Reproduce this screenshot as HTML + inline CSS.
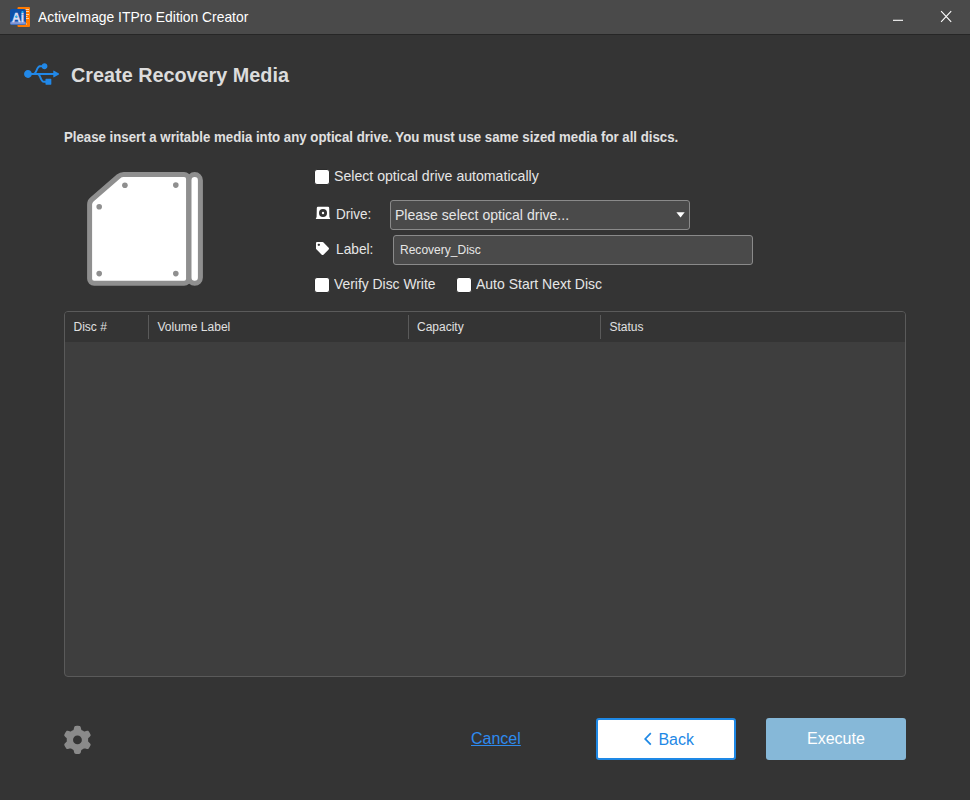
<!DOCTYPE html>
<html><head><meta charset="utf-8">
<style>
*{box-sizing:border-box;margin:0;padding:0}
html,body{width:970px;height:800px;overflow:hidden;background:#343434;font-family:"Liberation Sans",sans-serif;color:#e6e6e6}
.abs{position:absolute}
.t{position:absolute;white-space:nowrap;transform-origin:0 0;display:inline-block}
#titlebar{left:0;top:0;width:970px;height:34px;background:#4a4a4a}
#tbline{left:0;top:34px;width:970px;height:1px;background:#262626}
#apptitle{left:38px;top:8px;font-size:15px;color:#fff;line-height:18px;transform:scaleX(.924)}
#h1{left:70.5px;top:62px;font-size:20.5px;font-weight:bold;color:#dcdcdc;line-height:26px;transform:scaleX(.966)}
#msg{left:64px;top:128px;font-size:14px;font-weight:bold;color:#e0e0e0;line-height:18px;transform:scaleX(.945)}
.cb{width:16px;height:16px;background:#fff;border:1px solid #2d2d2d;border-radius:3px}
.lbl{font-size:15px;color:#e6e6e6;line-height:18px}
#drive{left:390px;top:200px;width:300px;height:30px;background:#4a4a4a;border:1px solid #8a8a8a;border-radius:3px}
#drive span{left:3.7px;top:5px;font-size:15px;line-height:18px;color:#e6e6e6;transform:scaleX(.936)}
#label{left:393px;top:235px;width:360px;height:30px;background:#4a4a4a;border:1px solid #8a8a8a;border-radius:3px}
#label span{left:6.4px;top:6px;font-size:13px;line-height:16px;color:#e6e6e6;transform:scaleX(.925)}
#table{left:64px;top:311px;width:842px;height:366px;background:#3e3e3e;border:1px solid #5a5a5a;border-radius:4px;overflow:hidden}
#thead{left:0;top:0;width:840px;height:30px;background:#343434}
.th{font-size:12px;color:#e0e0e0;top:8px;line-height:14px;white-space:nowrap}
.sep{top:3px;width:1px;height:24px;background:#5a5a5a}
#cancel{left:471px;top:729px;font-size:16px;color:#2e8bef;text-decoration:underline;line-height:20px}
#back{left:596px;top:718px;width:140px;height:42px;background:#fff;border:2px solid #1e88e5;border-radius:3px}
#back span{left:60.4px;top:9.5px;color:#1e88e5;font-size:16px;line-height:20px}
#exec{left:766px;top:718px;width:140px;height:42px;background:#86b8d8;border-radius:3px}
#exec span{left:41px;top:10.5px;color:#fff;font-size:16px;line-height:20px}
</style></head><body>
<div class="abs" id="titlebar"></div><div class="abs" id="tbline"></div>
<svg class="abs" style="left:8px;top:6px" width="24" height="22" viewBox="0 0 24 22">
<rect x="9.500" y="1" width="12.500" height="20" rx="1" fill="#ff7a00"/>
<path d="M17.500 3.500h3.500M18 5.500h3M18 8.500h3M18 10.500h1.500M18 12.500h3M18 18h1" stroke="#ffe6cc" stroke-width=".8"/>
<rect x="2" y="3" width="16" height="16" rx="2" fill="#0d4fa8"/>
<rect x="2.300" y="15.600" width="15.400" height="3" rx="1.200" fill="#7f95d6"/>
<text x="4" y="15.500" font-family="Liberation Sans, sans-serif" font-weight="bold" font-size="12" fill="#dcdcf2" stroke="#dcdcf2" stroke-width=".35" textLength="12" lengthAdjust="spacingAndGlyphs">Ai</text>
<circle cx="14.500" cy="6" r="1.100" fill="#27b4f0"/><ellipse cx="8.300" cy="10.600" rx="1.300" ry=".9" fill="#27b4f0"/>
</svg>
<div class="t" id="apptitle">ActiveImage ITPro Edition Creator</div>
<svg class="abs" style="left:880px;top:0" width="90" height="34" viewBox="0 0 90 34"><path d="M13 20.3h10" stroke="#fff" stroke-width="1.1" fill="none"/><path d="M61.1 11.2l10.1 10.6m0-10.6l-10.1 10.6" stroke="#fff" stroke-width="1.1" fill="none"/></svg>

<svg class="abs" style="left:23.8px;top:59.6px" width="35.1" height="28" viewBox="0 0 640 512"><path fill="#2188e8" d="M641.5 256c0 3.100-1.700 6.100-4.500 7.500L547.900 317c-1.400.8-2.800 1.400-4.500 1.400-1.400 0-3.100-.3-4.500-1.100-2.800-1.700-4.500-4.500-4.500-7.800v-35.600H295.700c25.300 39.600 40.500 106.900 69.600 106.900H392V354c0-5 3.900-8.900 8.900-8.900H490c5 0 8.900 3.900 8.900 8.900v89.100c0 5-3.900 8.900-8.900 8.900h-89.100c-5 0-8.900-3.900-8.900-8.900v-26.700h-26.700c-75.400 0-81.100-142.500-124.700-142.500H140.300c-8.100 30.600-35.900 53.500-69 53.500C32 327.300 0 295.300 0 256s32-71.300 71.300-71.300c33.100 0 61 22.800 69 53.500 39.100 0 43.900 9.500 74.600-60.400C255 88.700 273 95.700 323.800 95.700c7.500-20.900 27-35.600 50.400-35.600 29.500 0 53.500 23.900 53.500 53.500s-23.900 53.500-53.500 53.500c-23.400 0-42.900-14.800-50.400-35.600H294c-29.100 0-44.300 67.400-69.600 106.900h310.100v-35.600c0-3.300 1.700-6.100 4.500-7.800 2.800-1.700 6.400-1.400 8.900.3l89.100 53.500c2.800 1.100 4.500 4.100 4.500 7.200z"/></svg>
<div class="t" id="h1">Create Recovery Media</div>
<div class="t" id="msg">Please insert a writable media into any optical drive. You must use same sized media for all discs.</div>

<svg class="abs" style="left:80px;top:165px" width="130" height="130" viewBox="80 165 130 130">
<path d="M123.700 174.500H184.100a4.500 4.500 0 0 1 4.500 4.500V278.800a4.500 4.500 0 0 1 -4.500 4.500H94.100a4.500 4.500 0 0 1 -4.500 -4.500V204.500Q89.600 201.500 91.900 199.500L118.400 176.500Q120.700 174.500 123.700 174.500z" fill="#fff" stroke="#8f8f8f" stroke-width="5" stroke-linejoin="round"/>
<rect x="189" y="174.500" width="11.400" height="108.800" rx="5.700" fill="#fff" stroke="#8f8f8f" stroke-width="5"/>
<g fill="#8f8f8f"><circle cx="124.900" cy="185.300" r="2.800"/><circle cx="175.800" cy="185.100" r="2.800"/><circle cx="99.200" cy="206.800" r="2.800"/><circle cx="99.200" cy="273.600" r="2.800"/><circle cx="175.800" cy="273.600" r="2.800"/></g>
</svg>

<div class="abs cb" style="left:314px;top:169px"></div>
<div class="t lbl" style="left:334.3px;top:167px;transform:scaleX(.941)">Select optical drive automatically</div>

<svg class="abs" style="left:314px;top:205px" width="18" height="16" viewBox="314 205 18 16"><path d="M318 206.700h10a1.200 1.200 0 0 1 1.200 1.200l.2 9.200.7 1.400a.4.400 0 0 1-.4.600h-13.400a.4.400 0 0 1-.4-.6l.7-1.400.2-9.200a1.200 1.200 0 0 1 1.200-1.200z" fill="#fff"/><circle cx="323" cy="213" r="4" fill="#343434"/><circle cx="323" cy="213" r="1.200" fill="#fff"/></svg>
<div class="t lbl" style="left:335.6px;top:205px;transform:scaleX(.9)">Drive:</div>
<div class="abs" id="drive"><span class="t">Please select optical drive...</span>
<svg class="abs" style="left:284.5px;top:11px" width="10" height="6" viewBox="0 0 10 6"><path d="M.4.300h8.300L4.550 5.500z" fill="#fff"/></svg></div>

<svg class="abs" style="left:316.3px;top:241.5px" width="13" height="13" viewBox="0 0 512 512"><path fill="#fff" d="M0 252.118V48C0 21.490 21.490 0 48 0h204.118a48 48 0 0 1 33.941 14.059l211.882 211.882c18.745 18.745 18.745 49.137 0 67.882L293.823 497.941c-18.745 18.745-49.137 18.745-67.882 0L14.059 286.059A48 48 0 0 1 0 252.118zM112 64c-26.510 0-48 21.490-48 48s21.490 48 48 48 48-21.490 48-48-21.490-48-48-48z"/></svg>
<div class="t lbl" style="left:335.6px;top:240px;transform:scaleX(.915)">Label:</div>
<div class="abs" id="label"><span class="t">Recovery_Disc</span></div>

<div class="abs cb" style="left:314px;top:277px"></div>
<div class="t lbl" style="left:334px;top:275.2px;transform:scaleX(.925)">Verify Disc Write</div>
<div class="abs cb" style="left:456px;top:277px"></div>
<div class="t lbl" style="left:476px;top:275.2px;transform:scaleX(.933)">Auto Start Next Disc</div>

<div class="abs" id="table"><div class="abs" id="thead"></div>
<div class="abs th" style="left:8.500px">Disc #</div><div class="abs sep" style="left:83px"></div>
<div class="abs th" style="left:92.500px">Volume Label</div><div class="abs sep" style="left:343px"></div>
<div class="abs th" style="left:352px">Capacity</div><div class="abs sep" style="left:535px"></div>
<div class="abs th" style="left:544.500px">Status</div>
</div>

<svg class="abs" style="left:60px;top:720px" width="36" height="40" viewBox="60 720 36 40"><path fill="#8a8a8a" fill-rule="evenodd" d="M88.15 739.90L88.14 739.53L88.12 739.15L88.09 738.78L88.11 738.40L88.40 737.97L88.93 737.46L89.56 736.88L90.14 736.26L90.55 735.64L90.67 735.09L90.52 734.62L90.33 734.17L90.12 733.72L89.90 733.28L89.66 732.85L89.41 732.43L89.14 732.02L88.86 731.61L88.56 731.22L88.23 730.85L87.69 730.68L86.95 730.73L86.12 730.93L85.30 731.18L84.60 731.38L84.08 731.42L83.74 731.24L83.43 731.03L83.12 730.83L82.80 730.63L82.47 730.45L82.14 730.28L81.80 730.13L81.48 729.92L81.25 729.45L81.08 728.74L80.89 727.91L80.64 727.09L80.31 726.43L79.89 726.04L79.41 725.94L78.92 725.88L78.43 725.83L77.94 725.81L77.45 725.80L76.96 725.81L76.47 725.83L75.98 725.88L75.49 725.94L75.01 726.04L74.59 726.43L74.26 727.09L74.01 727.91L73.82 728.74L73.65 729.45L73.42 729.92L73.10 730.13L72.76 730.28L72.43 730.45L72.10 730.63L71.78 730.83L71.47 731.03L71.16 731.24L70.82 731.42L70.30 731.38L69.60 731.18L68.78 730.93L67.95 730.73L67.21 730.68L66.67 730.85L66.34 731.22L66.04 731.61L65.76 732.02L65.49 732.43L65.24 732.85L65.00 733.28L64.78 733.72L64.57 734.17L64.38 734.62L64.23 735.09L64.35 735.64L64.76 736.26L65.34 736.88L65.97 737.46L66.50 737.97L66.79 738.40L66.81 738.78L66.78 739.15L66.76 739.53L66.75 739.90L66.76 740.27L66.78 740.65L66.81 741.02L66.79 741.40L66.50 741.83L65.97 742.34L65.34 742.92L64.76 743.54L64.35 744.16L64.23 744.71L64.38 745.18L64.57 745.63L64.78 746.08L65.00 746.52L65.24 746.95L65.49 747.37L65.76 747.78L66.04 748.19L66.34 748.58L66.67 748.95L67.21 749.12L67.95 749.07L68.78 748.87L69.60 748.62L70.30 748.42L70.82 748.38L71.16 748.56L71.47 748.77L71.78 748.97L72.10 749.17L72.43 749.35L72.76 749.52L73.10 749.67L73.42 749.88L73.65 750.35L73.82 751.06L74.01 751.89L74.26 752.71L74.59 753.37L75.01 753.76L75.49 753.86L75.98 753.92L76.47 753.97L76.96 753.99L77.45 754.00L77.94 753.99L78.43 753.97L78.92 753.92L79.41 753.86L79.89 753.76L80.31 753.37L80.64 752.71L80.89 751.89L81.08 751.06L81.25 750.35L81.48 749.88L81.80 749.67L82.14 749.52L82.47 749.35L82.80 749.17L83.12 748.97L83.43 748.77L83.74 748.56L84.08 748.38L84.60 748.42L85.30 748.62L86.12 748.87L86.95 749.07L87.69 749.12L88.23 748.95L88.56 748.58L88.86 748.19L89.14 747.78L89.41 747.37L89.66 746.95L89.90 746.52L90.12 746.08L90.33 745.63L90.52 745.18L90.67 744.71L90.55 744.16L90.14 743.54L89.56 742.92L88.93 742.34L88.40 741.83L88.11 741.40L88.09 741.02L88.12 740.65L88.14 740.27zM77.45 735.50a4.40 4.40 0 1 0 0 8.80 4.40 4.40 0 1 0 0 -8.80z"/></svg>

<div class="t" id="cancel">Cancel</div>
<div class="abs" id="back"><svg class="abs" style="left:44px;top:11px" width="12" height="16" viewBox="0 0 12 16"><path d="M8.800 2.200L3.200 7.900l5.600 5.700" stroke="#1e88e5" stroke-width="1.700" fill="none"/></svg><span class="t">Back</span></div>
<div class="abs" id="exec"><span class="t">Execute</span></div>
</body></html>
